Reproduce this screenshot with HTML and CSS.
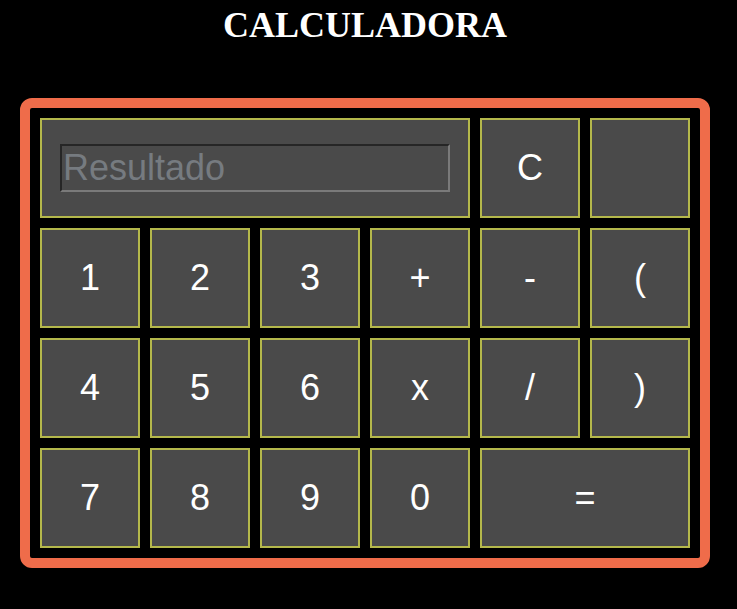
FILE: index.html
```html
<!DOCTYPE html>
<html lang="es">
<head>
<meta charset="utf-8">
<title>Calculadora</title>
<link rel="stylesheet" href="styles.css">
</head>
<body>
<h1 class="title">CALCULADORA</h1>
<div class="calc">
  <div class="cell display-cell span4">
    <input class="display" type="text" placeholder="Resultado">
  </div>
  <button class="cell key">C</button>
  <button class="cell key"></button>
  <button class="cell key">1</button>
  <button class="cell key">2</button>
  <button class="cell key">3</button>
  <button class="cell key">+</button>
  <button class="cell key">-</button>
  <button class="cell key">(</button>
  <button class="cell key">4</button>
  <button class="cell key">5</button>
  <button class="cell key">6</button>
  <button class="cell key">x</button>
  <button class="cell key">/</button>
  <button class="cell key">)</button>
  <button class="cell key">7</button>
  <button class="cell key">8</button>
  <button class="cell key">9</button>
  <button class="cell key">0</button>
  <button class="cell key span2">=</button>
</div>
</body>
</html>
```
FILE: styles.css
```css
html, body {
  margin: 0;
  padding: 0;
  background: #000;
}
body {
  width: 737px;
  height: 609px;
  overflow: hidden;
}
.title {
  width: 730px;
  margin: 4px 0 0 0;
  font-family: "Liberation Serif", "Times New Roman", serif;
  font-weight: bold;
  font-size: 36px;
  line-height: 42px;
  text-align: center;
  color: #fff;
}
.calc {
  margin: 52px 0 0 20px;
  width: 670px;
  box-sizing: border-box;
  width: 690px;
  border: 10px solid #ef6c4a;
  border-radius: 12px;
  padding: 10px;
  display: grid;
  grid-template-columns: repeat(6, 100px);
  grid-auto-rows: 100px;
  gap: 10px;
  background: #000;
}
.cell {
  box-sizing: border-box;
  background: #4a4a4a;
  border: 2px solid #b4b84b;
  margin: 0;
  padding: 0;
}
.span4 { grid-column: span 4; }
.span2 { grid-column: span 2; }
.display-cell {
  display: flex;
  align-items: center;
  justify-content: center;
}
.display {
  box-sizing: border-box;
  width: 390px;
  height: 48px;
  margin: 0;
  padding: 0 0 0 1px;
  background: #4a4a4a;
  border: 2px solid;
  border-color: #262626 #7a7a7a #7a7a7a #262626;
  font-family: "Liberation Sans", Arial, sans-serif;
  font-size: 36px;
  color: #fff;
  outline: none;
}
.display::placeholder {
  color: #767b80;
  opacity: 1;
}
.key {
  font-family: "Liberation Sans", Arial, sans-serif;
  font-size: 36px;
  color: #fff;
  cursor: pointer;
}
```
